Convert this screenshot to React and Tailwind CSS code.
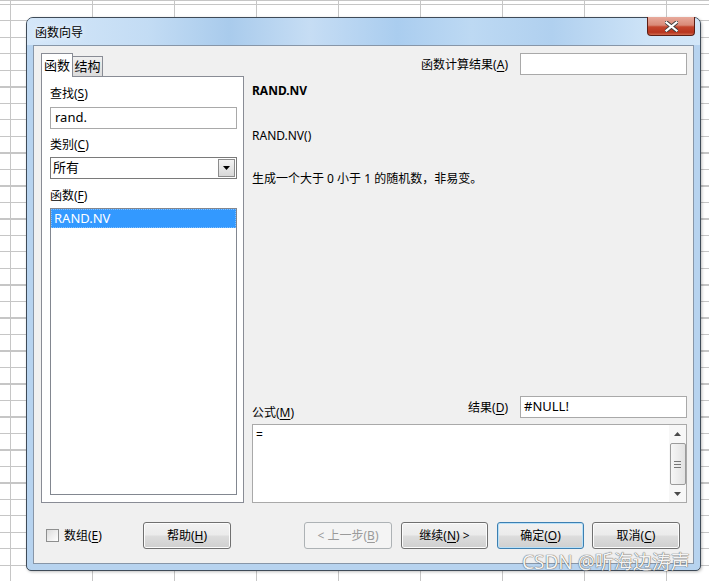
import React from 'react'

function K({ children }) {
  return <span className="underline underline-offset-[2px] decoration-[1px]">{children}</span>
}

function Btn({ children, className = '', disabled = false, primary = false }) {
  const tone = disabled
    ? 'border-[#adb2b5] text-[#9a9a9a] bg-[#f4f4f4]'
    : primary
    ? 'border-[#3c7fb1] text-black bg-[linear-gradient(180deg,#f1f1f1_0%,#ebebeb_48%,#dddddd_52%,#cfcfcf_100%)] shadow-[inset_0_0_0_1px_#b8e0f8]'
    : 'border-[#707070] text-black bg-[linear-gradient(180deg,#f2f2f2_0%,#ebebeb_48%,#dddddd_52%,#cfcfcf_100%)] shadow-[inset_0_0_0_1px_#fcfcfc]'
  return (
    <div className={`h-[27px] flex items-center justify-center rounded-[3px] border leading-[17px] ${tone} ${className}`}>
      {children}
    </div>
  )
}

function Arrow({ up }) {
  return (
    <svg width="7" height="4" viewBox="0 0 7 4">
      <path d={up ? 'M0 4 L3.5 0 L7 4 Z' : 'M0 0 L7 0 L3.5 4 Z'} fill="#4a4a4a" />
    </svg>
  )
}

export default function App() {
  return (
    <div className="relative w-[709px] h-[581px] overflow-hidden bg-white [background-image:repeating-linear-gradient(90deg,#c6c6c6_0_1px,transparent_1px_82px),repeating-linear-gradient(180deg,#c6c6c6_0_1px,transparent_1px_16.5px)] [background-position:10px_0,0_4px] pt-[17px] pl-[26px] font-['Noto_Sans','Noto_Sans_CJK_SC',sans-serif] text-[12px] text-black">
      {/* Dialog */}
      <div className="w-[675px] h-[554px] flex flex-col border border-[#3f4b58] rounded-t-[7px] rounded-b-[5px] bg-[#b7d3ef] shadow-[1px_1px_3px_rgba(0,0,0,0.25)]">
        {/* Title bar */}
        <div className="h-[27px] flex items-start rounded-t-[6px] bg-[linear-gradient(90deg,#d5e7f9_0%,#c3dcf4_18%,#a9cbec_30%,#c6ddf4_42%,#aacdef_55%,#bdd9f3_66%,#b0d0ef_78%,#cde3f7_92%,#d2e6f8_100%)]">
          <div className="pl-[8px] pt-[6px] leading-[17px] [text-shadow:0_0_6px_#ffffff]">函数向导</div>
          <div className="ml-auto mr-[5px] -mt-px w-[48px] h-[19px] flex items-center justify-center rounded-b-[4px] border border-t-0 border-[#5c1e14] bg-[linear-gradient(180deg,#e8aa9c_0%,#d98a78_45%,#c4462e_55%,#b8351f_85%,#cf6a4f_100%)]">
            <svg width="13" height="11" viewBox="0 0 13 11">
              <path d="M1.5 1.5 L11.5 9.5 M11.5 1.5 L1.5 9.5" stroke="#3b3b3b" strokeWidth="4" strokeLinecap="square" />
              <path d="M1.5 1.5 L11.5 9.5 M11.5 1.5 L1.5 9.5" stroke="#ffffff" strokeWidth="2.2" strokeLinecap="square" />
            </svg>
          </div>
        </div>

        {/* Client area */}
        <div className="mx-[6px] h-[519px] border border-[#8796a8] bg-[#f0f0f0] pt-[7px] pl-[7px] pr-[6px] flex flex-col">
          <div className="h-[450px] flex">
            {/* Left: tabs */}
            <div className="w-[203px] flex flex-col">
              <div className="h-[23px] flex items-end">
                <div className="relative z-10 -mb-px w-[32px] h-[24px] border border-b-0 border-[#898c95] bg-white flex items-center justify-center leading-[17px] text-[13px]">函数</div>
                <div className="w-[30px] h-[20px] border border-l-0 border-b-0 border-[#898c95] bg-[linear-gradient(180deg,#f0f0f0,#dcdcdc)] flex items-center justify-center leading-[17px] text-[13px]">结构</div>
              </div>
              <div className="h-[427px] border border-[#898c95] bg-white pl-[8px] pr-[6px] flex flex-col">
                <div className="mt-[8px] h-[17px] leading-[17px]">查找(<K>S</K>)</div>
                <div className="mt-[5px] h-[22px] border border-[#a9a9a9] bg-white pl-[4px] flex items-center text-[13px]">rand.</div>
                <div className="mt-[7px] h-[17px] leading-[17px]">类别(<K>C</K>)</div>
                <div className="mt-[4px] h-[22px] border border-[#7a7a7a] bg-white pl-[2px] pr-px flex items-center">
                  <span className="text-[13px]">所有</span>
                  <div className="ml-auto w-[17px] h-[18px] border border-[#8c8c8c] bg-[linear-gradient(180deg,#f4f4f4,#d8d8d8)] flex items-center justify-center">
                    <svg width="7" height="4" viewBox="0 0 7 4"><path d="M0 0 L7 0 L3.5 4 Z" fill="#000" /></svg>
                  </div>
                </div>
                <div className="mt-[8px] h-[17px] leading-[17px]">函数(<K>F</K>)</div>
                <div className="mt-[4px] h-[287px] border border-[#828790] bg-white">
                  <div className="h-[19px] bg-[#3399ff] border border-dotted border-[#7fbfff] text-white flex items-center pl-[2px] text-[13px]">RAND.NV</div>
                </div>
              </div>
            </div>

            {/* Right column */}
            <div className="w-[435px] ml-[8px] flex flex-col">
              <div className="h-[22px] flex items-center justify-end">
                <span className="leading-[17px]">函数计算结果(<K>A</K>)</span>
                <div className="ml-[12px] w-[167px] h-[22px] border border-[#a9a9a9] bg-white" />
              </div>
              <div className="mt-[7px] leading-[17px] font-bold">RAND.NV</div>
              <div className="mt-[28px] leading-[17px]">RAND.NV()</div>
              <div className="mt-[26px] leading-[17px]">生成一个大于 0 小于 1 的随机数，非易变。</div>

              <div className="mt-auto h-[22px] flex items-start">
                <span className="mt-[8px] leading-[17px]">公式(<K>M</K>)</span>
                <span className="ml-auto self-center leading-[17px]">结果(<K>D</K>)</span>
                <div className="ml-[12px] w-[167px] h-[22px] border border-[#a9a9a9] bg-white pl-[3px] flex items-center text-[13px]">#NULL!</div>
              </div>
              <div className="mt-[6px] h-[79px] border border-[#a9a9a9] bg-white flex">
                <div className="flex-1 pl-[3px] pt-px leading-[17px]">=</div>
                <div className="w-[17px] bg-[#f7f7f7] flex flex-col items-center">
                  <div className="h-[17px] flex items-center justify-center"><Arrow up /></div>
                  <div className="mt-px w-[16px] h-[42px] rounded-[2px] border border-[#9b9b9b] bg-[linear-gradient(90deg,#f6f6f6,#e2e2e2)] flex flex-col items-center justify-center gap-[2px]">
                    <div className="w-[7px] h-px bg-[#777]" />
                    <div className="w-[7px] h-px bg-[#777]" />
                    <div className="w-[7px] h-px bg-[#777]" />
                  </div>
                  <div className="flex-1 flex items-center justify-center"><Arrow /></div>
                </div>
              </div>
            </div>
          </div>

          {/* Bottom buttons */}
          <div className="mt-[19px] h-[27px] flex items-center">
            <div className="w-[102px] flex items-center">
              <div className="ml-[5px] w-[13px] h-[13px] border border-[#8e8f8f] bg-[linear-gradient(135deg,#dcdcdc,#ffffff)]" />
              <span className="ml-[5px] leading-[17px]">数组(<K>E</K>)</span>
            </div>
            <Btn className="w-[88px]">帮助(<K>H</K>)</Btn>
            <Btn className="ml-[73px] w-[88px]" disabled>&lt; 上一步(<K>B</K>)</Btn>
            <Btn className="ml-[9px] w-[87px]">继续(<K>N</K>) &gt;</Btn>
            <Btn className="ml-[9px] w-[87px]" primary>确定(<K>O</K>)</Btn>
            <Btn className="ml-[8px] w-[88px]">取消(<K>C</K>)</Btn>
          </div>
        </div>
      </div>

      {/* Watermark */}
      <div className="absolute left-[522px] top-[550px] text-[19px] leading-[24px] text-[#f4f4f4] [text-shadow:0_0_1px_#555,0_0_1px_#555]">
        CSDN @听海边涛声
      </div>
    </div>
  )
}
